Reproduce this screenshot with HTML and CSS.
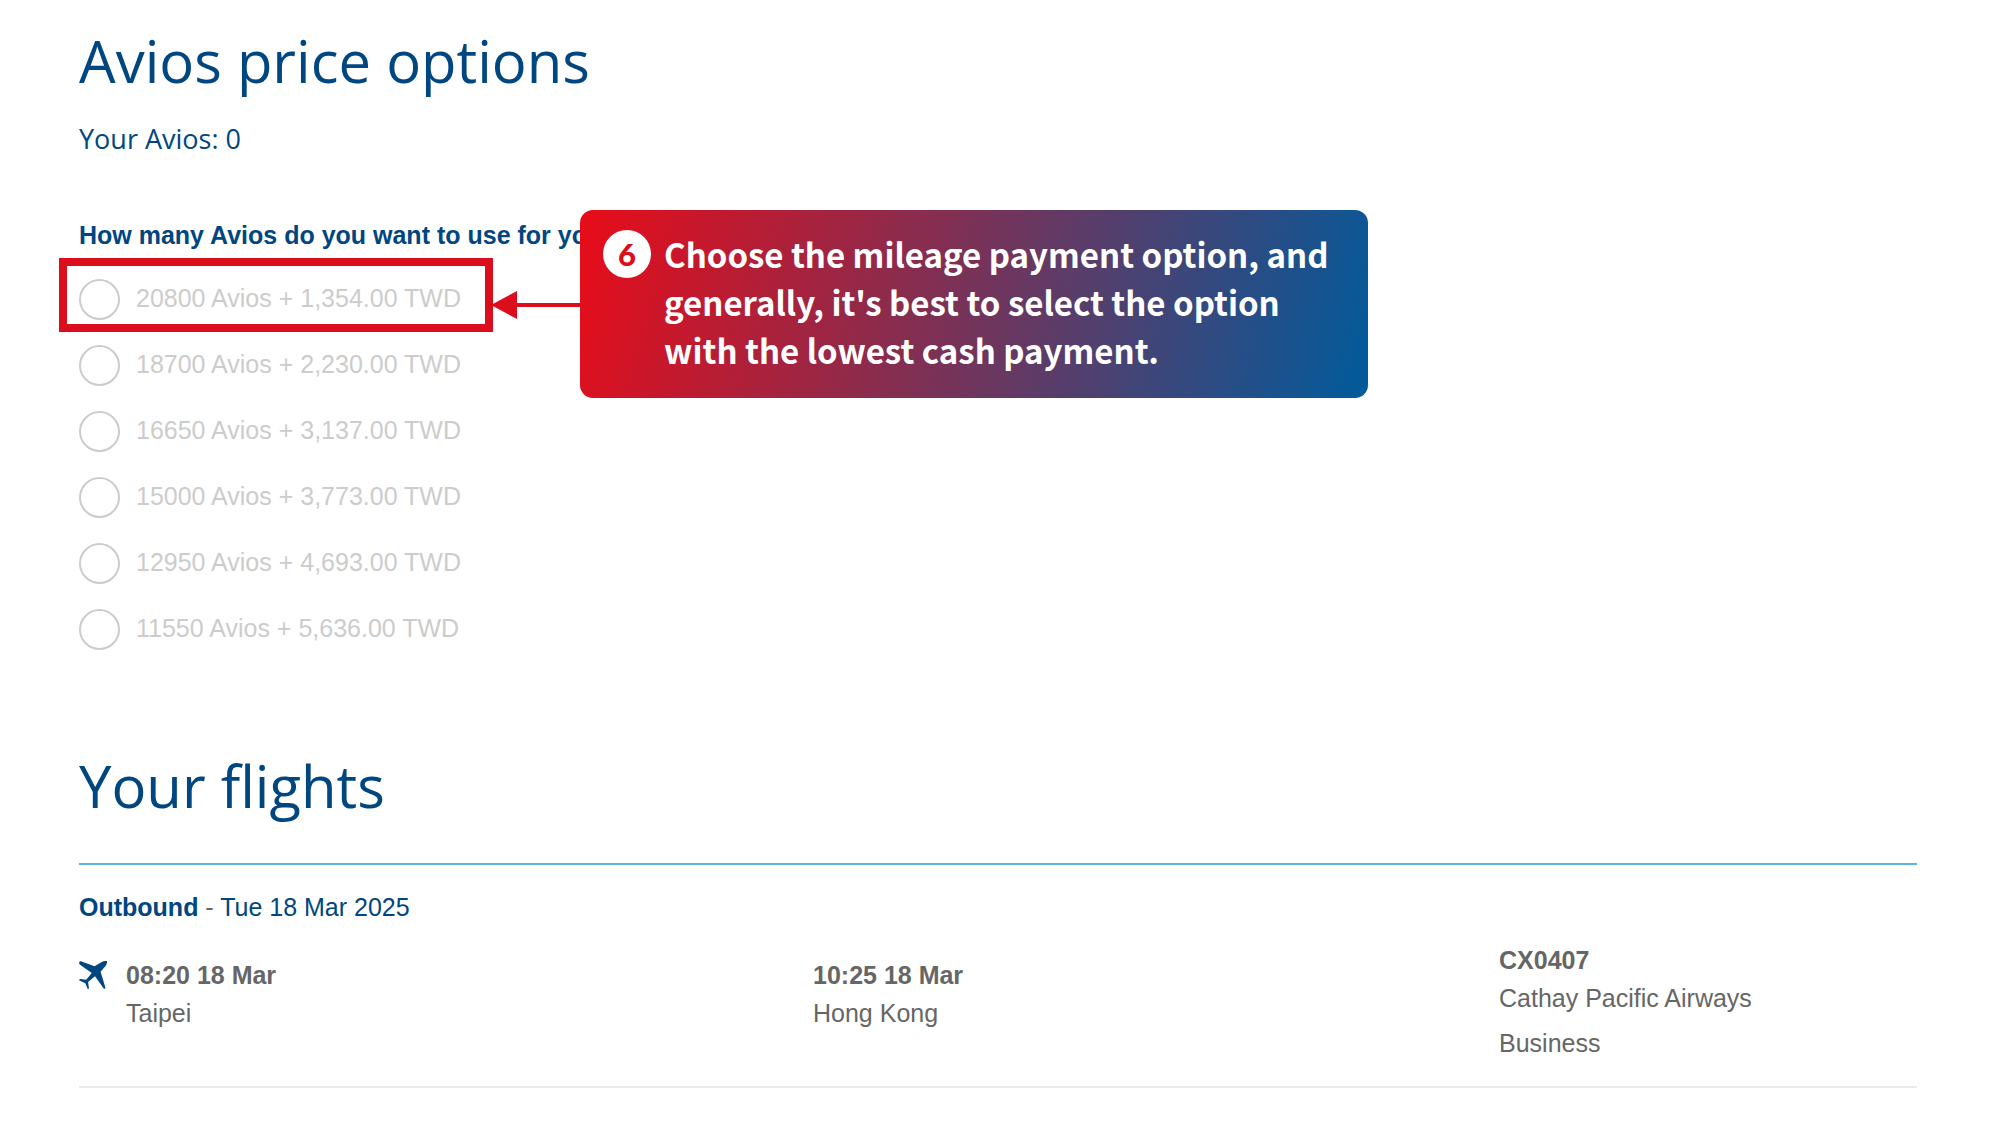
FILE: index.html
```html
<!DOCTYPE html>
<html lang="en">
<head>
<meta charset="utf-8">
<title>Avios price options</title>
<link rel="stylesheet" href="styles.css">
</head>
<body>
<main class="page">
	<section class="price-options">
		<h1>Avios price options</h1>
		<p class="balance">Your Avios: 0</p>

		<form class="avios-form">
			<fieldset>
				<legend>How many Avios do you want to use for your</legend>
				<ul class="options">
					<li class="highlight">
						<input type="radio" name="avios" id="avios-20800" disabled>
						<label for="avios-20800">20800 Avios + 1,354.00 TWD</label>
					</li>
					<li>
						<input type="radio" name="avios" id="avios-18700" disabled>
						<label for="avios-18700">18700 Avios + 2,230.00 TWD</label>
					</li>
					<li>
						<input type="radio" name="avios" id="avios-16650" disabled>
						<label for="avios-16650">16650 Avios + 3,137.00 TWD</label>
					</li>
					<li>
						<input type="radio" name="avios" id="avios-15000" disabled>
						<label for="avios-15000">15000 Avios + 3,773.00 TWD</label>
					</li>
					<li>
						<input type="radio" name="avios" id="avios-12950" disabled>
						<label for="avios-12950">12950 Avios + 4,693.00 TWD</label>
					</li>
					<li>
						<input type="radio" name="avios" id="avios-11550" disabled>
						<label for="avios-11550">11550 Avios + 5,636.00 TWD</label>
					</li>
				</ul>
			</fieldset>

			<!-- Step 6 note, over the form -->
			<svg class="arrow" width="90" height="28" viewBox="0 0 90 28" aria-hidden="true">
				<path d="M0 14 26 0v28z"/>
				<path d="M25 12h65v4H25z"/>
			</svg>
			<aside class="callout">
				<span class="step">6</span>
				<p>Choose the mileage payment option, and<br>
				generally, it's best to select the option<br>
				with the lowest cash payment.</p>
			</aside>
		</form>
	</section>

	<section class="flights">
		<h2>Your flights</h2>
		<p class="direction"><strong>Outbound</strong> - <span>Tue 18 Mar 2025</span></p>
		<div class="flight">
			<svg class="plane" width="28" height="28" viewBox="0 0 28 28" aria-hidden="true">
				<path d="M.2 1.600C.3.500 1.300 0 2.500.4L15.500 5.300 22.800.9C24.800-.2 27.200-.1 28 .1 28.200 1.900 27.800 3.400 26.500 4.900L21.600 10.800 26.300 26.300C26.400 27.400 25.900 28 24.900 27.700L16 15.300 9.100 20.900 9.900 26.900C9.800 27.900 9.300 28.300 8.700 27.900L6.300 22.300.4 19.400C0 18.500.6 17.900 1.500 18L7.200 18.800 12.800 12.100.7 3.400C.2 3 .1 2.200.2 1.600z"/>
			</svg>
			<div class="stop">
				<strong>08:20 18 Mar</strong>
				<p>Taipei</p>
			</div>
			<div class="stop">
				<strong>10:25 18 Mar</strong>
				<p>Hong Kong</p>
			</div>
			<div class="carrier">
				<strong>CX0407</strong>
				<p>Cathay Pacific Airways</p>
				<p class="cabin">Business</p>
			</div>
		</div>
	</section>
</main>
</body>
</html>
```
FILE: styles.css
```css
body, h1, h2, p, ul, fieldset, legend {
	margin: 0;
	padding: 0;
	border: 0;
}
body {
	background: #fff;
	color: #666;
	font-family: "Liberation Sans", Arial, sans-serif;
	font-size: 25px;
	line-height: 38px;
}
.page {
	padding: 21px 83px 0 79px;
}
h1, h2 {
	color: #004680;
	font-family: "Open Sans", sans-serif;
	font-size: 58px;
	font-weight: 400;
	line-height: 80px;
}
.balance {
	margin-top: 19px;
	color: #004680;
	font-family: "Open Sans", sans-serif;
	font-size: 27px;
}

/* Price options */
.avios-form {
	position: relative;
	margin-top: 58px;
}
legend {
	color: #004680;
	font-weight: 700;
}
.options {
	display: flex;
	flex-direction: column;
	gap: 25px;
	padding-top: 25px;
	list-style: none;
}
.options li {
	position: relative;
	display: flex;
	align-items: flex-start;
	align-self: flex-start;
	gap: 16px;
	color: #ccc;
}
.options input {
	appearance: none;
	width: 41px;
	height: 41px;
	margin: 0;
	border: 2px solid #ccc;
	border-radius: 50%;
	background: #fff;
}
.highlight::after {
	content: "";
	position: absolute;
	inset: -21px -32px -12px -20px;
	border: 8px solid #dc0d1c;
}
.arrow {
	position: absolute;
	top: 75px;
	left: 412px;
	fill: #dc0d1c;
}
.callout {
	position: absolute;
	top: -6px;
	left: 501px;
	display: flex;
	gap: 13px;
	box-sizing: border-box;
	width: 788px;
	padding: 20px 23px 24px;
	border-radius: 13px;
	background: linear-gradient(105deg, #e90c18, #005b9c);
	color: #fff;
}
.callout p {
	font-family: "Noto Sans CJK SC", sans-serif;
	font-size: 33px;
	font-weight: 700;
	line-height: 48px;
	white-space: nowrap;
}
.step {
	flex: none;
	width: 48px;
	height: 48px;
	border-radius: 50%;
	background: #fff;
	color: #dc0d1c;
	font-family: Lato, sans-serif;
	font-size: 31px;
	font-weight: 900;
	line-height: 48px;
	text-align: center;
}

/* Flights */
.flights {
	margin-top: 96px;
}
.flights h2 {
	padding-bottom: 37px;
	border-bottom: 2px solid #5bb5e5;
}
.direction {
	margin-top: 23px;
}
.direction strong,
.direction span {
	color: #004680;
}
.flight {
	display: grid;
	grid-template-columns: 47px 687fr 686fr 418fr;
	padding: 15px 0 24px;
	border-bottom: 2px solid #ebebeb;
}
.plane {
	margin-top: 20px;
	fill: #004680;
}
.stop {
	padding-top: 15px;
}
.cabin {
	margin-top: 7px;
}
```
